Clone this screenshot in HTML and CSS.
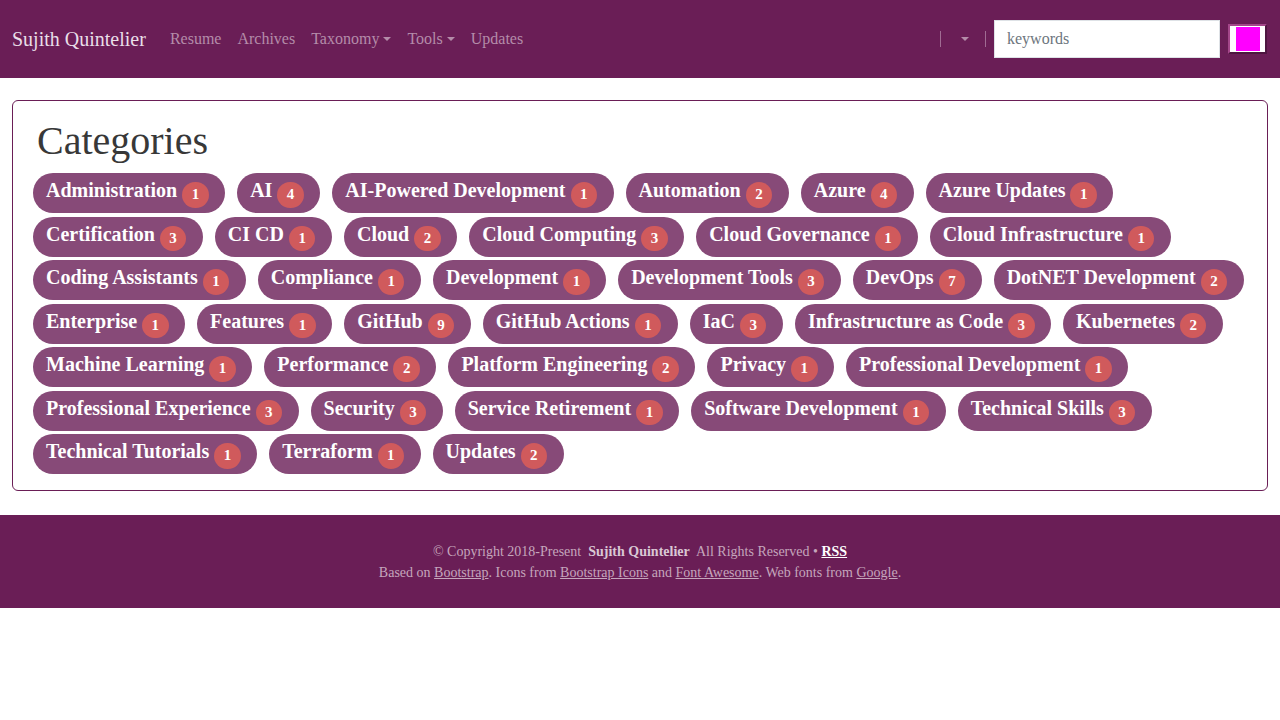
FILE: index.html
```html
<!DOCTYPE html>
<html lang="en">
<head>
<meta charset="utf-8">
<title>Categories - Sujith Quintelier</title>
<link rel="stylesheet" href="styles.css">
</head>
<body>
<nav class="navbar">
  <a class="brand" href="#">Sujith Quintelier</a>
  <ul class="nav">
    <li><a href="#">Resume</a></li>
    <li><a href="#">Archives</a></li>
    <li><a href="#" class="dropdown">Taxonomy</a></li>
    <li><a href="#" class="dropdown">Tools</a></li>
    <li><a href="#">Updates</a></li>
  </ul>
  <div class="nav-right">
    <span class="vr"></span>
    <span class="lang dropdown"></span>
    <span class="vr"></span>
    <input class="search" type="text" placeholder="keywords">
    <span class="color-btn"><span class="swatch"></span></span>
  </div>
</nav>

<main class="container">
  <section class="card">
    <h1 class="title">Categories</h1>
    <div class="tags">
      <a class="tag" href="#">Administration <span class="badge">1</span></a>
      <a class="tag" href="#">AI <span class="badge">4</span></a>
      <a class="tag" href="#">AI-Powered Development <span class="badge">1</span></a>
      <a class="tag" href="#">Automation <span class="badge">2</span></a>
      <a class="tag" href="#">Azure <span class="badge">4</span></a>
      <a class="tag" href="#">Azure Updates <span class="badge">1</span></a>
      <a class="tag" href="#">Certification <span class="badge">3</span></a>
      <a class="tag" href="#">CI CD <span class="badge">1</span></a>
      <a class="tag" href="#">Cloud <span class="badge">2</span></a>
      <a class="tag" href="#">Cloud Computing <span class="badge">3</span></a>
      <a class="tag" href="#">Cloud Governance <span class="badge">1</span></a>
      <a class="tag" href="#">Cloud Infrastructure <span class="badge">1</span></a>
      <a class="tag" href="#">Coding Assistants <span class="badge">1</span></a>
      <a class="tag" href="#">Compliance <span class="badge">1</span></a>
      <a class="tag" href="#">Development <span class="badge">1</span></a>
      <a class="tag" href="#">Development Tools <span class="badge">3</span></a>
      <a class="tag" href="#">DevOps <span class="badge">7</span></a>
      <a class="tag" href="#">DotNET Development <span class="badge">2</span></a>
      <a class="tag" href="#">Enterprise <span class="badge">1</span></a>
      <a class="tag" href="#">Features <span class="badge">1</span></a>
      <a class="tag" href="#">GitHub <span class="badge">9</span></a>
      <a class="tag" href="#">GitHub Actions <span class="badge">1</span></a>
      <a class="tag" href="#">IaC <span class="badge">3</span></a>
      <a class="tag" href="#">Infrastructure as Code <span class="badge">3</span></a>
      <a class="tag" href="#">Kubernetes <span class="badge">2</span></a>
      <a class="tag" href="#">Machine Learning <span class="badge">1</span></a>
      <a class="tag" href="#">Performance <span class="badge">2</span></a>
      <a class="tag" href="#">Platform Engineering <span class="badge">2</span></a>
      <a class="tag" href="#">Privacy <span class="badge">1</span></a>
      <a class="tag" href="#">Professional Development <span class="badge">1</span></a>
      <a class="tag" href="#">Professional Experience <span class="badge">3</span></a>
      <a class="tag" href="#">Security <span class="badge">3</span></a>
      <a class="tag" href="#">Service Retirement <span class="badge">1</span></a>
      <a class="tag" href="#">Software Development <span class="badge">1</span></a>
      <a class="tag" href="#">Technical Skills <span class="badge">3</span></a>
      <a class="tag" href="#">Technical Tutorials <span class="badge">1</span></a>
      <a class="tag" href="#">Terraform <span class="badge">1</span></a>
      <a class="tag" href="#">Updates <span class="badge">2</span></a>
    </div>
  </section>
</main>

<footer class="footer">
  <p>&copy; Copyright 2018-Present&nbsp; <strong>Sujith Quintelier</strong>&nbsp; All Rights Reserved &bull; <a class="rss" href="#">RSS</a></p>
  <p>Based on <a href="#">Bootstrap</a>. Icons from <a href="#">Bootstrap Icons</a> and <a href="#">Font Awesome</a>. Web fonts from <a href="#">Google</a>.</p>
</footer>
</body>
</html>
```

FILE: styles.css
```css
* { box-sizing: border-box; }

html, body {
  margin: 0;
  padding: 0;
  background: #fff;
  font-family: "Liberation Serif", "Times New Roman", serif;
  font-size: 16px;
  line-height: 1.5;
  color: #212529;
}

a { text-decoration: none; }

/* ---------- navbar ---------- */
.navbar {
  display: flex;
  align-items: center;
  height: 78px;
  padding: 0 13px 0 12px;
  background: #6a1e56;
}

.brand {
  font-size: 20px;
  line-height: 30px;
  color: #e9dfe8;
  margin-right: 16px;
}

.nav {
  display: flex;
  list-style: none;
  margin: 0;
  padding: 0;
}

.nav a {
  display: block;
  padding: 8px 8px;
  color: #b48ca9;
  font-size: 16px;
  line-height: 24px;
}

.dropdown::after {
  content: "";
  display: inline-block;
  margin-left: 4px;
  vertical-align: 3px;
  border-top: 4px solid currentColor;
  border-left: 4px solid transparent;
  border-right: 4px solid transparent;
}

.nav-right {
  margin-left: auto;
  display: flex;
  align-items: center;
}

.vr {
  display: block;
  width: 1px;
  height: 16px;
  background: #a06c93;
}

.lang {
  display: block;
  width: 44px;
  padding-left: 3px;
  text-align: center;
  color: #b48ca9;
  line-height: 16px;
}
.lang.dropdown::after { margin-left: 0; vertical-align: 3px; }

.search {
  margin-left: 8px;
  width: 226px;
  height: 38px;
  border: 1px solid #dee2e6;
  padding: 0 12px;
  font-family: inherit;
  font-size: 16px;
  color: #212529;
  background: #fff;
  outline: none;
}
.search::placeholder { color: #6c757d; }

.color-btn {
  display: block;
  margin-left: 8px;
  width: 39px;
  height: 30px;
  padding: 2px 5px 2px 6px;
  border: 2px solid;
  border-color: #a4478a #4e1640 #4e1640 #a4478a;
  background: #fff;
}
.swatch {
  display: block;
  width: 24px;
  height: 24px;
  margin-top: -1px;
  background: #ff00ff;
}

/* ---------- content ---------- */
.container {
  padding: 22px 12px 24px;
}

.card {
  border: 1px solid #6a1e56;
  border-radius: 6px;
  padding: 16px 20px 16px;
}

.title {
  margin: 0 0 8px;
  padding-left: 4px;
  font-size: 40px;
  font-weight: 400;
  line-height: 48px;
  color: #383838;
}

.tags {
  display: flex;
  flex-wrap: wrap;
  column-gap: 12px;
  row-gap: 3.5px;
}

.tag {
  display: inline-block;
  height: 40px;
  padding: 2px 16.5px 0 13px;
  border-radius: 20px;
  background: #874a78;
  color: #fff;
  font-size: 20px;
  font-weight: 700;
  line-height: 30px;
  white-space: nowrap;
}

.badge {
  display: inline-block;
  width: 26.5px;
  height: 25.5px;
  border-radius: 13px;
  background: #d05a5c;
  color: #fff;
  font-size: 15px;
  font-weight: 700;
  line-height: 25.5px;
  text-align: center;
  vertical-align: -2px;
}

/* ---------- footer ---------- */
.footer {
  background: #6a1e56;
  padding: 26px 0 25px;
  text-align: center;
  color: #c5a6bc;
  font-size: 14px;
  line-height: 21px;
}
.footer p { margin: 0; }
.footer strong { color: #d9c7d4; }
.footer a {
  color: #c5a6bc;
  text-decoration: underline;
}
.footer a.rss {
  color: #fff;
  font-weight: 700;
}
```
